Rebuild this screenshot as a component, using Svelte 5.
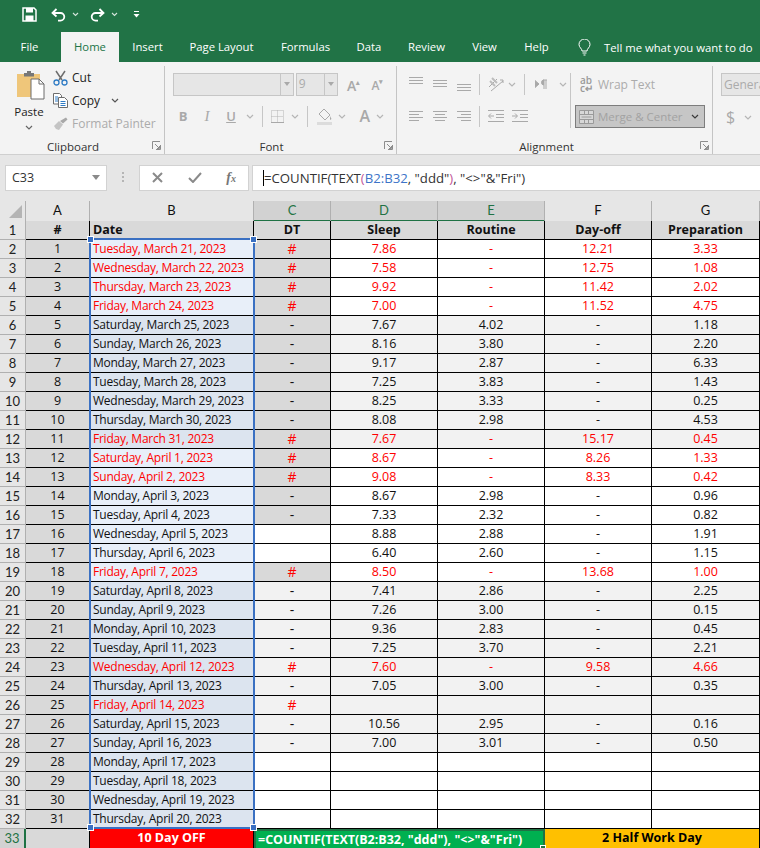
<script>
  const flagged = '#';
  // C, D, E, F, G for each day, starting on March 21
  const days = [
    ['#', '7.86', '-', '12.21', '3.33'],
    ['#', '7.58', '-', '12.75', '1.08'],
    ['#', '9.92', '-', '11.42', '2.02'],
    ['#', '7.00', '-', '11.52', '4.75'],
    ['-', '7.67', '4.02', '-', '1.18'],
    ['-', '8.16', '3.80', '-', '2.20'],
    ['-', '9.17', '2.87', '-', '6.33'],
    ['-', '7.25', '3.83', '-', '1.43'],
    ['-', '8.25', '3.33', '-', '0.25'],
    ['-', '8.08', '2.98', '-', '4.53'],
    ['#', '7.67', '-', '15.17', '0.45'],
    ['#', '8.67', '-', '8.26', '1.33'],
    ['#', '9.08', '-', '8.33', '0.42'],
    ['-', '8.67', '2.98', '-', '0.96'],
    ['-', '7.33', '2.32', '-', '0.82'],
    ['', '8.88', '2.88', '-', '1.91'],
    ['', '6.40', '2.60', '-', '1.15'],
    ['#', '8.50', '-', '13.68', '1.00'],
    ['-', '7.41', '2.86', '-', '2.25'],
    ['-', '7.26', '3.00', '-', '0.15'],
    ['-', '9.36', '2.83', '-', '0.45'],
    ['-', '7.25', '3.70', '-', '2.21'],
    ['#', '7.60', '-', '9.58', '4.66'],
    ['-', '7.05', '3.00', '-', '0.35'],
    ['#', '', '', '', ''],
    ['-', '10.56', '2.95', '-', '0.16'],
    ['-', '7.00', '3.01', '-', '0.50'],
    ['', '', '', '', ''],
    ['', '', '', '', ''],
    ['', '', '', '', ''],
    ['', '', '', '', ''],
  ];

  function isShaded(n) {
    return (n >= 5 && n <= 11) || (n >= 19 && n <= 27);
  }

  function dtTone(n) {
    if (n <= 15 || n === 18) return 'dt-grey';
    return isShaded(n) ? 'dt-soft' : 'dt-white';
  }

  function dateTone(n) {
    return isShaded(n) || n >= 28 ? 'date-dark' : 'date-light';
  }

  function longDate(i) {
    return new Date(2023, 2, 21 + i).toLocaleDateString('en-US', {
      weekday: 'long',
      month: 'long',
      day: 'numeric',
      year: 'numeric',
    });
  }

  const columns = ['A', 'B', 'C', 'D', 'E', 'F', 'G'];
  const active = ['C', 'D', 'E'];
</script>

{#snippet chev(color = '#8a8a8a')}
  <svg class="chev" width="8" height="5" viewBox="0 0 8 5">
    <path d="M1 1l3 3 3-3" fill="none" stroke={color} stroke-width="1.2" />
  </svg>
{/snippet}

{#snippet launcher()}
  <svg class="launcher" width="9" height="9" viewBox="0 0 9 9">
    <path d="M.5 8V.5H8M8.500 4v4.500H4M3 3l4 4M7.500 5v2.500H5" fill="none" stroke="#8c8c8c" />
  </svg>
{/snippet}

{#snippet lines(rows, w = 14)}
  <svg width={w} height="16" viewBox="0 0 {w} 16">
    {#each rows as r}
      <path d="M{r[0]} {r[2] + 0.5}H{r[1]}" stroke="#a9a9a9" />
    {/each}
  </svg>
{/snippet}

<div class="excel">
  <div class="titlebar">
    <svg class="qat-save" width="15" height="15" viewBox="0 0 15 15">
      <path d="M1 1h11l2 2v11H1z" fill="none" stroke="#fff" stroke-width="1.5" />
      <path d="M4 1h7v4.500H4z" fill="#fff" />
      <path d="M3.500 8.500h8V14h-8z" fill="#fff" />
    </svg>
    <svg class="qat-undo" width="15" height="14" viewBox="0 0 15 14">
      <path d="M5.500 1L1.500 5l4 3.500M2 5h7.500a3.800 3.800 0 0 1 0 7.600H7" fill="none" stroke="#fff" stroke-width="1.8" />
    </svg>
    <svg class="qat-chev" width="7" height="5" viewBox="0 0 7 5">
      <path d="M1 1l2.500 2.500L6 1" fill="none" stroke="#d5e5dc" stroke-width="1.100" />
    </svg>
    <svg class="qat-redo" width="15" height="14" viewBox="0 0 15 14">
      <path d="M9.500 1l4 4-4 3.500M13 5H5.500a3.800 3.800 0 0 0 0 7.600H8" fill="none" stroke="#fff" stroke-width="1.8" />
    </svg>
    <svg class="qat-chev" width="7" height="5" viewBox="0 0 7 5">
      <path d="M1 1l2.500 2.500L6 1" fill="none" stroke="#d5e5dc" stroke-width="1.100" />
    </svg>
    <svg class="qat-more" width="7" height="7" viewBox="0 0 7 7">
      <path d="M1 .5h5" stroke="#fff" />
      <path d="M.5 3h6L3.500 6.500z" fill="#fff" />
    </svg>
  </div>

  <div class="tabs">
    <span class="tab file">File</span>
    <span class="tab home">Home</span>
    <span class="tab insert">Insert</span>
    <span class="tab layout">Page Layout</span>
    <span class="tab formulas">Formulas</span>
    <span class="tab data">Data</span>
    <span class="tab review">Review</span>
    <span class="tab view">View</span>
    <span class="tab help">Help</span>
    <svg class="bulb" width="13" height="17" viewBox="0 0 13 17">
      <path d="M4 12c0-2.500-3-3.500-3-6.500a5.500 5.500 0 0 1 11 0c0 3-3 4-3 6.500zM4.500 14h4M5.500 16h2" fill="none" stroke="#fff" />
    </svg>
    <span class="tell">Tell me what you want to do</span>
  </div>

  <div class="ribbon">
    <section class="group clipboard">
      <div class="body clip-body">
        <div class="paste">
          <svg width="29" height="30" viewBox="0 0 29 30">
            <path d="M1 4h23v23H1z" fill="#efc67a" />
            <path d="M8 3h3V1h4v2h3v3.500H8z" fill="#777" />
            <path d="M15 9h8l5 5v15H15z" fill="#fff" stroke="#6d6d6d" />
            <path d="M23 9v5h5" fill="none" stroke="#6d6d6d" />
          </svg>
          <span class="paste-label">Paste</span>
          {@render chev('#666')}
        </div>
        <div class="clip-actions">
          <div class="clip-row">
            <svg width="15" height="16" viewBox="0 0 15 16">
              <path d="M3 1l6 9M12 1L6 10" stroke="#6d6d6d" stroke-width="1.500" />
              <circle cx="3.500" cy="12.500" r="2.500" fill="none" stroke="#2f7bc4" stroke-width="1.300" />
              <circle cx="11.500" cy="12.500" r="2.500" fill="none" stroke="#2f7bc4" stroke-width="1.300" />
            </svg>
            <span>Cut</span>
          </div>
          <div class="clip-row">
            <svg width="15" height="15" viewBox="0 0 15 15">
              <path d="M.5.500h6l2 2V11H.5z" fill="#fff" stroke="#6d6d6d" />
              <path d="M5.500 4.500h6l3 3v7h-9z" fill="#fff" stroke="#6d6d6d" />
              <path d="M2 4h3M2 6h3M2 8h3M7.500 8.500h5M7.500 10.500h5M7.500 12.500h5" stroke="#2f7bc4" />
            </svg>
            <span>Copy</span>
            <span class="copy-chev">{@render chev('#555')}</span>
          </div>
          <div class="clip-row off">
            <svg width="15" height="14" viewBox="0 0 15 14">
              <path d="M1 9l5-5 4 3.500L6 13 3 12z" fill="#c4c4c4" />
              <path d="M7 4l6-3.500 1.500 2L10 6.500z" fill="#a8a8a8" />
            </svg>
            <span>Format Painter</span>
          </div>
        </div>
      </div>
      <div class="group-label clip-label">Clipboard{@render launcher()}</div>
    </section>

    <section class="group font">
      <div class="body">
        <div class="font-top">
          <div class="combo font-name"><i></i><b></b></div>
          <div class="combo font-size"><em>9</em><i></i><b></b></div>
          <span class="grow-a">A<small>▴</small></span>
          <span class="grow-a shrink">A<small>▾</small></span>
        </div>
        <div class="font-bottom">
          <span class="style bold">B</span>
          <span class="style italic">I</span>
          <span class="style under">U</span>
          {@render chev('#b5b5b5')}
          <span class="sep"></span>
          <svg width="13" height="13" viewBox="0 0 13 13">
            <path d="M.5.500h12v12H.5zM6.500.500v12M.5 6.500h12" fill="none" stroke="#b4b4b4" stroke-dasharray="1 1" />
            <path d="M0 12.500h13" stroke="#a8a8a8" />
          </svg>
          {@render chev('#b5b5b5')}
          <span class="sep"></span>
          <svg width="15" height="17" viewBox="0 0 15 17">
            <path d="M7 1l6 6-5 5-6-6z" fill="none" stroke="#a9a9a9" />
            <path d="M13 8l1.500 3-1.500 1z" fill="#a9a9a9" />
            <path d="M0 14h15v3H0z" fill="#dcdcdc" />
          </svg>
          {@render chev('#b5b5b5')}
          <span class="font-color">A</span>
          {@render chev('#b5b5b5')}
        </div>
      </div>
      <div class="group-label font-label">Font{@render launcher()}</div>
    </section>

    <section class="group alignment">
      <div class="body align-body">
        <div class="align-left">
          <div class="align-row top">
            {@render lines([[0, 14, 1], [0, 14, 4], [0, 14, 7]])}
            {@render lines([[0, 14, 4], [0, 14, 7], [0, 14, 10]])}
            {@render lines([[0, 14, 8], [0, 14, 11], [0, 14, 14]])}
            <span class="sep"></span>
            <svg width="16" height="16" viewBox="0 0 16 16">
              <path d="M1 11l8-8M3 15L15 5M12 4h3v3" fill="none" stroke="#a9a9a9" />
              <path d="M4 2l5 5M2 5l5 5" stroke="#bdbdbd" stroke-width="2" />
            </svg>
            {@render chev('#b5b5b5')}
            <span class="sep"></span>
            <svg width="12" height="11" viewBox="0 0 12 11">
              <path d="M0 1.500l4 3.500-4 3.500zM8 1h4M9 1v9M11 1v9M9 1a2.500 2.500 0 0 0 0 5" fill="#a9a9a9" stroke="#a9a9a9" />
            </svg>
            {@render chev('#b5b5b5')}
          </div>
          <div class="align-row bottom">
            {@render lines([[0, 14, 3], [0, 10, 6], [0, 14, 9], [0, 10, 12]])}
            {@render lines([[0, 14, 3], [2, 12, 6], [0, 14, 9], [2, 12, 12]])}
            {@render lines([[0, 14, 3], [4, 14, 6], [0, 14, 9], [4, 14, 12]])}
            <span class="sep"></span>
            <svg width="16" height="14" viewBox="0 0 16 14">
              <path d="M0 1.500h16M8 5.500h8M8 8.500h8M0 12.500h16M6 7H1M3 4.500L.5 7 3 9.500" fill="none" stroke="#a9a9a9" />
            </svg>
            <svg width="16" height="14" viewBox="0 0 16 14">
              <path d="M0 1.500h16M8 5.500h8M8 8.500h8M0 12.500h16M0 7h5M3 4.500L5.500 7 3 9.500" fill="none" stroke="#a9a9a9" />
            </svg>
          </div>
        </div>
        <span class="sep tall"></span>
        <div class="align-right">
          <div class="wrap">
            <span class="wrap-icon">ab<br />c↵</span>
            <span>Wrap Text</span>
          </div>
          <div class="merge">
            <svg width="15" height="14" viewBox="0 0 15 14">
              <path d="M.5.500h14v13H.5zM.5 4.500h14M.5 9.500h14M5.500.500v4M9.500.500v4M5.500 9.500v4M9.500 9.500v4M2.500 7h10" fill="#d7d7d7" stroke="#9a9a9a" />
            </svg>
            <span class="merge-text">Merge &amp; Center</span>
            {@render chev('#3a3a3a')}
          </div>
        </div>
      </div>
      <div class="group-label align-label">Alignment{@render launcher()}</div>
    </section>

    <section class="group number">
      <div class="combo general">Genera</div>
      <div class="dollar">$ {@render chev('#b5b5b5')}</div>
    </section>
  </div>

  <div class="formula-bar">
    <div class="name-box">
      <span>C33</span>
      <svg width="8" height="5" viewBox="0 0 8 5"><path d="M0 0h8L4 5z" fill="#8a8a8a" /></svg>
    </div>
    <svg class="dots" width="3" height="11" viewBox="0 0 3 11">
      <path d="M0 0h2v2H0zM0 4h2v2H0zM0 8h2v2H0z" fill="#b5b5b5" />
    </svg>
    <div class="fx-box">
      <svg width="11" height="11" viewBox="0 0 11 11"><path d="M1 1l9 9M10 1l-9 9" stroke="#8a8a8a" stroke-width="2" /></svg>
      <svg width="14" height="11" viewBox="0 0 14 11"><path d="M1 6l4 4 8-9" fill="none" stroke="#8a8a8a" stroke-width="2" /></svg>
      <span class="fx">f<small>x</small></span>
    </div>
    <div class="formula-input">
      <span class="caret"></span>=COUNTIF(TEXT<span class="pink">(</span><span class="blue">B2:B32</span>, "ddd"<span class="pink">)</span>, "&lt;&gt;"&amp;"Fri")
    </div>
  </div>

  <div class="sheet">
    <div class="row col-heads">
      <div class="corner"><svg width="13" height="13" viewBox="0 0 13 13"><path d="M13 0v13H0z" fill="#b4b4b4" /></svg></div>
      {#each columns as col}
        <div class="col-head" class:on={active.includes(col)}>{col}</div>
      {/each}
    </div>

    <div class="row heading">
      <div class="row-head">1</div>
      <div class="cell">#</div>
      <div class="cell left">Date</div>
      <div class="cell">DT</div>
      <div class="cell">Sleep</div>
      <div class="cell">Routine</div>
      <div class="cell">Day-off</div>
      <div class="cell">Preparation</div>
    </div>

    {#each days as d, i}
      {@const n = i + 1}
      <div class="row" class:shaded={isShaded(n)} class:red={d[0] === flagged}>
        <div class="row-head">{n + 1}</div>
        <div class="cell idx">{n}</div>
        <div class="cell left date {dateTone(n)}">{longDate(i)}</div>
        <div class="cell dt {dtTone(n)}">{d[0]}</div>
        <div class="cell">{d[1]}</div>
        <div class="cell">{d[2]}</div>
        <div class="cell">{d[3]}</div>
        <div class="cell">{d[4]}</div>
      </div>
    {/each}

    <div class="row totals">
      <div class="row-head on">33</div>
      <div class="cell idx"></div>
      <div class="cell off-day">10 Day OFF</div>
      <div class="cell editing">=COUNTIF(TEXT(B2:B32, "ddd"), "&lt;&gt;"&amp;"Fri")<span class="fill-handle"></span></div>
      <div class="cell half-day">2 Half Work Day</div>
    </div>

    <div class="selection">
      <span class="handle tl"></span>
      <span class="handle tr"></span>
      <span class="handle bl"></span>
      <span class="handle br"></span>
    </div>
  </div>
</div>

<style>
  :global(body) {
    margin: 0;
    background: #fff;
  }

  .excel {
    width: 760px;
    height: 848px;
    overflow: hidden;
    font-family: 'Open Sans', 'Noto Sans', sans-serif;
    color: #222;
  }

  /* --- Title bar --- */
  .titlebar {
    display: flex;
    align-items: center;
    height: 32px;
    padding: 0 0 3px 22px;
    box-sizing: border-box;
    background: #217346;
  }

  .qat-undo {
    margin-left: 14px;
  }

  .qat-redo {
    margin-left: 11px;
  }

  .qat-chev {
    margin-left: 6px;
  }

  .qat-more {
    margin-left: 15px;
  }

  /* --- Tabs --- */
  .tabs {
    display: flex;
    align-items: center;
    height: 30px;
    background: #217346;
    color: #fff;
    font-size: 11.300px;
  }

  .tab {
    box-sizing: border-box;
    line-height: 30px;
    text-align: center;
  }

  .file {
    width: 59px;
  }

  .home {
    width: 58px;
    margin-left: 2px;
    background: #f3f3f3;
    color: #217346;
  }

  .insert {
    width: 57px;
  }

  .layout {
    width: 91px;
  }

  .formulas {
    width: 77px;
  }

  .data {
    width: 50px;
  }

  .review {
    width: 65px;
  }

  .view {
    width: 51px;
  }

  .help {
    width: 53px;
  }

  .bulb {
    margin-left: 15px;
  }

  .tell {
    margin-left: 13px;
    white-space: nowrap;
  }

  /* --- Ribbon --- */
  .ribbon {
    display: flex;
    height: 93px;
    box-sizing: border-box;
    background: #f3f3f3;
    border-bottom: 1px solid #cfcfcf;
    font-size: 12px;
  }

  .group {
    position: relative;
    box-sizing: border-box;
    height: 88px;
    margin-top: 4px;
    border-right: 1px solid #c4c4c4;
  }

  .body {
    height: 71px;
    padding-top: 7px;
    box-sizing: border-box;
  }

  .group-label {
    text-align: center;
    font-size: 11.500px;
    line-height: 14px;
    color: #333;
    margin-top: 3px;
  }

  .launcher {
    position: absolute;
    right: 3px;
    bottom: 4px;
  }

  .sep {
    display: block;
    width: 1px;
    height: 21px;
    background: #c6c6c6;
  }

  .chev {
    flex: none;
  }

  /* Clipboard */
  .clipboard {
    width: 165px;
  }

  .clip-body {
    display: flex;
    padding-top: 4px;
  }

  .paste {
    display: flex;
    flex-direction: column;
    align-items: center;
    width: 58px;
  }

  .paste svg:first-child {
    margin-left: 3px;
  }

  .paste-label {
    margin-top: 3px;
    line-height: 17px;
    font-size: 11.500px;
  }

  .paste .chev {
    margin-top: 5px;
  }

  .clip-actions {
    display: flex;
    flex-direction: column;
    align-self: flex-start;
    margin: -4px 0 0 -5px;
  }

  .clip-row {
    display: flex;
    flex: none;
    align-items: center;
    gap: 4px;
    height: 23px;
    white-space: nowrap;
  }

  .clip-row svg {
    width: 15px;
  }

  .copy-chev {
    display: flex;
    margin-left: 7px;
  }

  .copy-chev svg {
    width: 8px;
  }

  .off {
    color: #ababab;
  }

  .clip-label {
    padding-right: 18px;
  }

  /* Font */
  .font {
    width: 232px;
  }

  .font-label {
    padding-right: 18px;
  }

  .font-top {
    display: flex;
    align-items: center;
    height: 22px;
    padding-left: 8px;
  }

  .combo {
    position: relative;
    box-sizing: border-box;
    height: 23px;
    background: #e6e6e6;
    border: 1px solid #c6c6c6;
    color: #ababab;
  }

  .combo i {
    position: absolute;
    right: 12px;
    top: 0;
    bottom: 0;
    width: 1px;
    background: #c6c6c6;
  }

  .combo b {
    position: absolute;
    right: 3px;
    top: 8px;
    border: 3.500px solid transparent;
    border-top: 4px solid #a9a9a9;
    border-bottom: 0;
  }

  .font-name {
    width: 123px;
  }

  .font-size {
    width: 43px;
    margin-left: 2px;
    padding-left: 2px;
    line-height: 20px;
  }

  .font-size em {
    font-style: normal;
  }

  .grow-a {
    margin-left: 9px;
    width: 25px;
    font-size: 14px;
    font-weight: 600;
    line-height: 22px;
    color: #a9a9a9;
    white-space: nowrap;
  }

  .grow-a small {
    font-size: 7px;
    vertical-align: 6px;
  }

  .shrink {
    margin-left: 0;
    font-size: 12px;
  }

  .font-bottom {
    display: grid;
    grid-template-columns: 24px 24px 24px 11px 9px 21px 15px 9px 24px 14px 24px 14px;
    justify-items: end;
    align-items: center;
    height: 24px;
    margin-top: 9px;
    padding-left: 6px;
  }

  .style {
    justify-self: center;
    font-size: 13px;
    color: #a9a9a9;
  }

  .bold {
    font-weight: 700;
  }

  .italic {
    font-family: 'Liberation Serif', serif;
    font-style: italic;
    font-size: 15px;
  }

  .under {
    text-decoration: underline;
    font-weight: 600;
  }

  .font-color {
    font-size: 16px;
    font-weight: 600;
    color: #a9a9a9;
  }

  /* Alignment */
  .alignment {
    width: 316px;
  }

  .align-label {
    padding-right: 16px;
  }

  .align-body {
    display: flex;
    padding-left: 12px;
  }

  .align-left {
    width: 161px;
  }

  .align-row {
    display: grid;
    align-items: center;
    justify-items: end;
  }

  .top {
    grid-template-columns: 14px 24px 24px 9px 24px 12px 9px 22px 20px;
    height: 22px;
  }

  .bottom {
    grid-template-columns: 14px 24px 24px 9px 24px 24px;
    height: 24px;
    margin-top: 9px;
  }

  .tall {
    height: 55px;
  }

  .align-right {
    margin-left: 4px;
    width: 130px;
  }

  .wrap {
    display: flex;
    align-items: center;
    gap: 5px;
    height: 22px;
    padding-left: 5px;
    color: #ababab;
  }

  .wrap-icon {
    font-size: 10px;
    line-height: 8px;
    font-weight: 600;
    color: #9a9a9a;
  }

  .merge {
    display: flex;
    align-items: center;
    box-sizing: border-box;
    height: 23px;
    margin-top: 10px;
    padding: 0 5px 0 3px;
    background: #c6c6c6;
    border: 1px solid #7d7d7d;
    color: #a2a2a2;
    font-size: 11.500px;
  }

  .merge-text {
    margin-left: 4px;
    flex: 1;
    white-space: nowrap;
  }

  /* Number */
  .number {
    flex: 1;
    border-right: 0;
    padding: 7px 0 0 8px;
    overflow: hidden;
  }

  .general {
    width: 60px;
    padding-left: 2px;
    line-height: 21px;
  }

  .dollar {
    display: flex;
    align-items: center;
    gap: 9px;
    margin-top: 9px;
    padding-left: 5px;
    height: 24px;
    font-size: 16px;
    color: #a9a9a9;
  }

  /* --- Formula bar --- */
  .formula-bar {
    display: flex;
    align-items: center;
    height: 46px;
    padding: 0 0 1px 5px;
    box-sizing: border-box;
    background: #e6e6e6;
  }

  .name-box,
  .fx-box,
  .formula-input {
    display: flex;
    align-items: center;
    box-sizing: border-box;
    height: 26px;
    background: #fff;
    border: 1px solid #d2d2d2;
  }

  .name-box {
    justify-content: space-between;
    width: 102px;
    padding: 0 6px;
    font-size: 12.500px;
    color: #333;
  }

  .dots {
    margin-left: 15px;
  }

  .fx-box {
    width: 110px;
    margin-left: 14px;
    padding: 0 12px;
    justify-content: space-between;
  }

  .fx {
    font-family: 'Liberation Serif', serif;
    font-style: italic;
    font-weight: 700;
    font-size: 14px;
    color: #777;
  }

  .fx small {
    font-size: 10px;
  }

  .formula-input {
    flex: 1;
    margin-left: 3px;
    padding-left: 10px;
    border-right: 0;
    font-size: 13.200px;
    white-space: pre;
    color: #333;
  }

  .caret {
    width: 1px;
    height: 16px;
    background: #000;
  }

  .blue {
    color: #3d74c8;
  }

  .pink {
    color: #c2569a;
  }

  /* --- Sheet --- */
  .sheet {
    position: relative;
    font-size: 12.500px;
    color: #111;
  }

  .row {
    display: grid;
    grid-template-columns: 26px 64px 164px 77px 107px 107px 107px 108px;
    height: 19px;
    line-height: 18px;
  }

  .col-heads {
    height: 20px;
    line-height: 19px;
    background: #e6e6e6;
    font-family: Lato, sans-serif;
    font-size: 13px;
  }

  .corner {
    display: flex;
    align-items: flex-end;
    justify-content: flex-end;
    box-sizing: border-box;
    padding: 0 3px 3px 0;
    border-right: 1px solid #b0b0b0;
    border-bottom: 1px solid #b0b0b0;
  }

  .col-head {
    box-sizing: border-box;
    text-align: center;
    border-right: 1px solid #b0b0b0;
    border-bottom: 1px solid #b0b0b0;
  }

  .col-head.on {
    background: #d2d2d2;
    color: #1f7244;
    border-bottom: 2px solid #1f7244;
  }

  .row-head {
    box-sizing: border-box;
    text-align: center;
    background: #e6e6e6;
    border-right: 1px solid #b0b0b0;
    border-bottom: 1px solid #b0b0b0;
    font-family: Lato, sans-serif;
    font-size: 13px;
    color: #222;
  }

  .row-head.on {
    background: #d2d2d2;
    color: #1f7244;
    border-right: 2px solid #1f7244;
  }

  .cell {
    box-sizing: border-box;
    text-align: center;
    white-space: nowrap;
    overflow: hidden;
    border-right: 1px solid #000;
    border-bottom: 1px solid #000;
  }

  .left {
    text-align: left;
    padding-left: 3px;
  }

  .date {
    font-size: 12px;
    letter-spacing: -0.25px;
  }

  .heading .cell {
    background: #d9d9d9;
    font-weight: 700;
  }

  .shaded .cell {
    background: #f2f2f2;
  }

  .red .cell {
    color: #ff0000;
  }

  .row .idx {
    background: #d9d9d9;
    color: #111;
  }

  .row .date-light {
    background: #e8eff9;
  }

  .row .date-dark {
    background: #dce4ef;
  }

  .row .dt-grey {
    background: #d9d9d9;
  }

  .row .dt-soft {
    background: #f2f2f2;
  }

  .row .dt-white {
    background: #fff;
  }

  .dt {
    font-size: 14px;
  }

  .totals .cell {
    font-weight: 700;
    border-bottom: 0;
  }

  .totals {
    grid-template-columns: 26px 64px 164px 291px 215px;
  }

  .off-day {
    background: #ff0000;
    color: #fff;
  }

  .totals .editing {
    position: relative;
    overflow: visible;
    text-align: left;
    padding-left: 2px;
    background: #00b050;
    color: #fff;
    border: 2px solid #1f7244;
  }

  .fill-handle {
    position: absolute;
    right: -3px;
    bottom: -2px;
    width: 4px;
    height: 4px;
    background: #1f7244;
    border: 1px solid #fff;
  }

  .half-day {
    background: #ffc000;
    color: #000;
  }

  /* Selection over B2:B32 */
  .selection {
    position: absolute;
    left: 89px;
    top: 37px;
    width: 166px;
    height: 591px;
    box-sizing: border-box;
    border: 2px solid #3a70c2;
    pointer-events: none;
  }

  .handle {
    position: absolute;
    width: 5px;
    height: 5px;
    background: #3a70c2;
    border: 1px solid #fff;
  }

  .tl {
    left: -4px;
    top: -4px;
  }

  .tr {
    right: -4px;
    top: -4px;
  }

  .bl {
    left: -4px;
    bottom: -4px;
  }

  .br {
    right: -4px;
    bottom: -4px;
  }
</style>
